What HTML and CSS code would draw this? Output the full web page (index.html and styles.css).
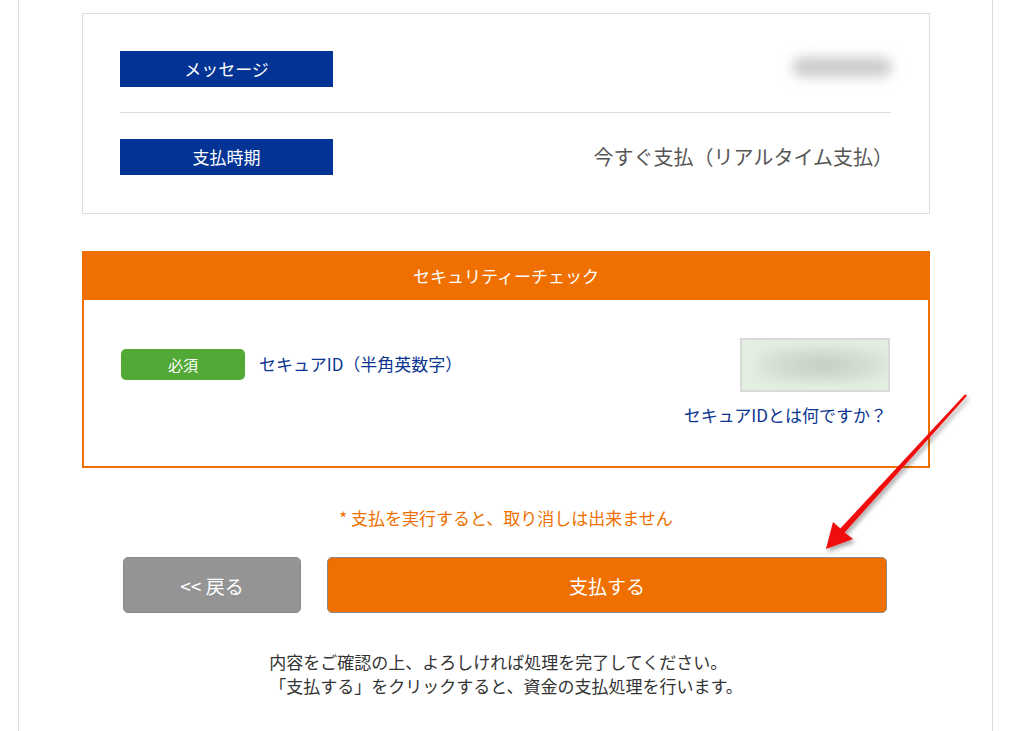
FILE: index.html
```html
<!DOCTYPE html>
<html lang="ja">
  <head>
    <meta charset="UTF-8" />
    <title>支払確認</title>
    <link rel="stylesheet" href="styles.css">
  </head>
  <body>
    <div class="page">
      <div class="info-card">
        <div class="info-row">
          <div class="info-label">メッセージ</div>
          <div class="info-value">
            <div class="blurred-text"></div>
          </div>
        </div>
        <div class="info-row">
          <div class="info-label">支払時期</div>
          <div class="info-value">今すぐ支払（リアルタイム支払）</div>
        </div>
      </div>

      <div class="security-box">
        <div class="security-header">セキュリティーチェック</div>
        <div class="security-body">
          <div class="security-row">
            <div class="field-name">
              <span class="required-badge">必須</span>
              <span class="field-label">セキュアID（半角英数字）</span>
            </div>
            <div class="secure-input">
              <div class="secure-input-blur"></div>
            </div>
          </div>
          <div class="help-link">セキュアIDとは何ですか？</div>
        </div>
      </div>

      <p class="warning">* 支払を実行すると、取り消しは出来ません</p>

      <div class="actions">
        <button class="btn btn-back">&lt;&lt; 戻る</button>
        <button class="btn btn-pay">支払する</button>
      </div>

      <div class="footnote">
        <p>内容をご確認の上、よろしければ処理を完了してください。<br>「支払する」をクリックすると、資金の支払処理を行います。</p>
      </div>
    </div>

    <!-- annotation arrow drawn over the page -->
    <svg class="arrow" width="1018" height="731" viewBox="0 0 1018 731">
      <defs>
        <filter id="arrowShadow" x="-20%" y="-20%" width="140%" height="140%">
          <feDropShadow dx="2" dy="3" stdDeviation="2" flood-color="#000" flood-opacity="0.35" />
        </filter>
      </defs>
      <polygon filter="url(#arrowShadow)" fill="#f00a0a"
        points="967,395.8 844.7,532.5 853,539 826,549 833,522 840.3,528.5 965.1,394.2" />
    </svg>
  </body>
</html>
```

FILE: styles.css
```css
* {
  margin: 0;
  padding: 0;
  box-sizing: border-box;
}

body {
  font-family: "Noto Sans CJK JP", "Noto Sans", sans-serif;
  background: #ffffff;
  color: #333;
  width: 1018px;
  height: 731px;
  overflow: hidden;
  position: relative;
}

.page {
  margin-left: 18px;
  width: 975px;
  min-height: 731px;
  border-left: 1px solid #dcdcdc;
  border-right: 1px solid #dcdcdc;
  padding: 13px 62px 40px 63px;
}

/* message / timing card */
.info-card {
  border: 1px solid #dcdcdc;
  padding: 12px 38px 13px 37px;
}

.info-row {
  display: flex;
  align-items: center;
  justify-content: space-between;
  padding: 25px 0;
}

.info-row + .info-row {
  border-top: 1px solid #dcdcdc;
  padding-top: 26px;
}

.info-label {
  width: 213px;
  height: 36px;
  background: #033495;
  color: #fff;
  font-size: 17px;
  line-height: 36px;
  text-align: center;
}

.info-value {
  font-size: 20px;
  color: #555;
  margin-right: -2px;
  line-height: 28px;
}

.blurred-text {
  width: 100px;
  height: 20px;
  margin-right: 1px;
  margin-top: -4px;
  background: #cdcdcd;
  border-radius: 10px;
  filter: blur(6px);
}

/* security check */
.security-box {
  margin-top: 37px;
  border: 2px solid #ef7000;
}

.security-header {
  height: 47px;
  background: #ef7000;
  color: #fff;
  font-size: 17px;
  line-height: 46px;
  text-align: center;
}

.security-body {
  padding: 38px 38px 38px 37px;
}

.security-row {
  display: flex;
  align-items: center;
  justify-content: space-between;
}

.field-name {
  display: flex;
  align-items: center;
  gap: 14px;
  margin-top: -1px;
}

.required-badge {
  display: inline-block;
  width: 124px;
  height: 31px;
  background: #52a935;
  border-radius: 5px;
  color: #fff;
  font-size: 15px;
  line-height: 31px;
  text-align: center;
}

.field-label {
  font-size: 17px;
  color: #0b3590;
  margin-top: -3px;
}

.secure-input {
  width: 150px;
  height: 54px;
  border: 2px solid #d9d9d9;
  background: #e3efe1;
  padding: 6px 0 6px 15px;
  overflow: hidden;
}

.secure-input-blur {
  height: 100%;
  background: radial-gradient(ellipse at center, #c3d0c1 0%, #d2ddd0 45%, #e6f1e4 100%);
  filter: blur(3px);
}

.help-link {
  margin-top: 10px;
  text-align: right;
  font-size: 17px;
  line-height: 26px;
  color: #0b3590;
  padding-right: 3px;
}

.warning {
  margin-top: 38px;
  text-align: center;
  font-size: 17px;
  line-height: 24px;
  color: #ee7000;
}

/* buttons */
.actions {
  display: flex;
  justify-content: center;
  gap: 26px;
  margin-top: 27px;
  padding-right: 2px;
}

.btn {
  height: 56px;
  border: 1px solid #8a8a8a;
  border-radius: 5px;
  color: #fff;
  font-family: inherit;
  font-size: 19px;
  cursor: pointer;
}

.btn-back {
  width: 178px;
  background: #949494;
}

.btn-pay {
  width: 560px;
  background: #ef7000;
}

.footnote {
  margin-top: 37px;
  text-align: center;
}

.footnote p {
  display: inline-block;
  text-align: left;
  font-size: 17px;
  line-height: 24px;
  color: #333;
}

.arrow {
  position: absolute;
  top: 0;
  left: 0;
  pointer-events: none;
}
```
